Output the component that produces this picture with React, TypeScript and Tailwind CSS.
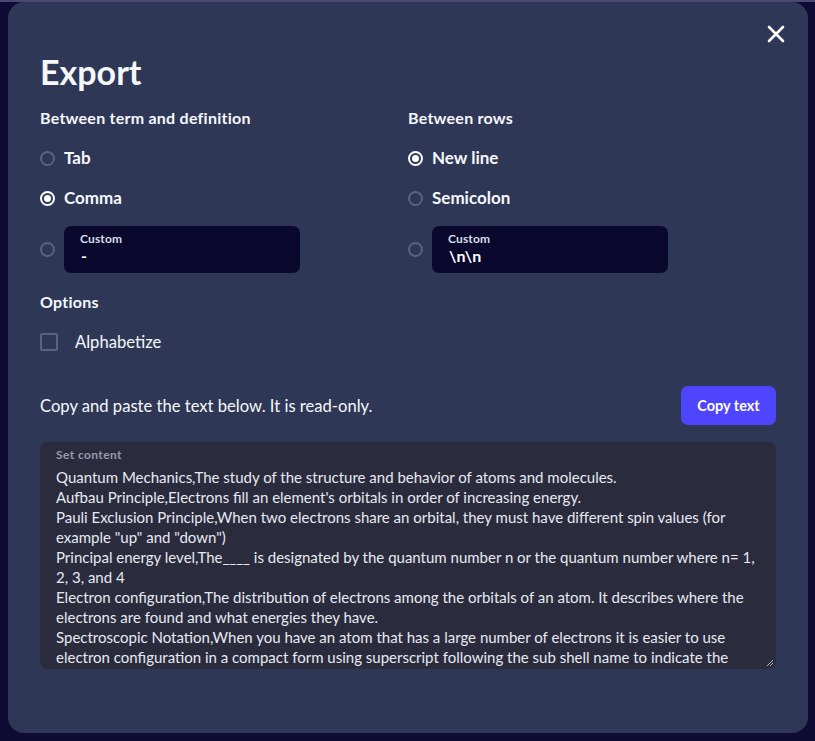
import React from "react";

const lines = [
  "Quantum Mechanics,The study of the structure and behavior of atoms and molecules.",
  "Aufbau Principle,Electrons fill an element's orbitals in order of increasing energy.",
  "Pauli Exclusion Principle,When two electrons share an orbital, they must have different spin values (for",
  'example "up" and "down")',
  "Principal energy level,The____ is designated by the quantum number n or the quantum number where n= 1,",
  "2, 3, and 4",
  "Electron configuration,The distribution of electrons among the orbitals of an atom. It describes where the",
  "electrons are found and what energies they have.",
  "Spectroscopic Notation,When you have an atom that has a large number of electrons it is easier to use",
  "electron configuration in a compact form using superscript following the sub shell name to indicate the",
];

function Radio({ checked }: { checked?: boolean }) {
  return checked ? (
    <span className="flex h-[15px] w-[15px] shrink-0 items-center justify-center rounded-full border-2 border-white">
      <span className="h-[7px] w-[7px] rounded-full bg-white" />
    </span>
  ) : (
    <span className="h-[15px] w-[15px] shrink-0 rounded-full border-2 border-[#586380]" />
  );
}

function RadioRow({ label, checked }: { label: string; checked?: boolean }) {
  return (
    <div className="flex h-[20px] items-center gap-[9px]">
      <Radio checked={checked} />
      <span className="text-[17px] font-bold leading-[20px] text-[#f6f7fb]">{label}</span>
    </div>
  );
}

function CustomRow({ value }: { value: string }) {
  return (
    <div className="flex items-center gap-[9px]">
      <Radio />
      <div className="flex h-[47px] w-[236px] flex-col rounded-[7px] bg-[#0a092d] pl-[16px] pt-[6px]">
        <span className="text-[12px] font-bold leading-[14px] tracking-[0.15px] text-[#d9dde8]">Custom</span>
        <span className="pl-[1px] text-[16px] font-bold leading-[20px] text-white">{value}</span>
      </div>
    </div>
  );
}

export default function App() {
  return (
    <div
      className="relative h-[741px] w-[815px] overflow-hidden bg-[#0f0b33]"
      style={{ fontFamily: "Lato, 'Noto Sans', sans-serif" }}
    >
      <div className="h-[2px] w-full bg-[#4d4673]" />
      <div className="relative ml-[8px] flex h-[731px] w-[800px] flex-col rounded-[16px] bg-[#2e3856] px-[32px] pt-[50px]">
        <button className="absolute right-[20px] top-[20px] flex h-[24px] w-[24px] items-center justify-center text-white">
          <svg width="18" height="18" viewBox="0 0 18 18" fill="none" stroke="currentColor" strokeWidth="2.6" strokeLinecap="round">
            <path d="M2 2 L16 16 M16 2 L2 16" />
          </svg>
        </button>
        <h1 className="text-[34px] font-bold leading-[40px] text-[#f6f7fb]">Export</h1>

        <div className="mt-[16px] grid grid-cols-2">
          <div className="flex flex-col">
            <div className="text-[16px] font-bold leading-[20px] tracking-[0.25px] text-[#f6f7fb]">Between term and definition</div>
            <div className="mt-[20px] flex flex-col gap-[20px]">
              <RadioRow label="Tab" />
              <RadioRow label="Comma" checked />
            </div>
            <div className="mt-[18px]">
              <CustomRow value="-" />
            </div>
          </div>
          <div className="flex flex-col">
            <div className="text-[16px] font-bold leading-[20px] tracking-[0.25px] text-[#f6f7fb]">Between rows</div>
            <div className="mt-[20px] flex flex-col gap-[20px]">
              <RadioRow label="New line" checked />
              <RadioRow label="Semicolon" />
            </div>
            <div className="mt-[18px]">
              <CustomRow value="\n\n" />
            </div>
          </div>
        </div>

        <div className="mt-[19px] text-[16px] font-bold leading-[20px] tracking-[0.25px] text-[#f6f7fb]">Options</div>
        <div className="mt-[20px] flex h-[20px] items-center gap-[17px]">
          <span className="h-[18px] w-[18px] rounded-[2px] border-2 border-[#586380]" />
          <span className="text-[16.6px] leading-[20px] text-[#f6f7fb]">Alphabetize</span>
        </div>

        <div className="mt-[34px] flex items-center justify-between">
          <span className="text-[16.6px] leading-[20px] text-[#f6f7fb]">Copy and paste the text below. It is read-only.</span>
          <button className="h-[39px] w-[95px] rounded-[7px] bg-[#4f45ff] text-[14.5px] font-bold text-white">Copy text</button>
        </div>

        <div className="relative mt-[17px] h-[227px] overflow-hidden rounded-[8px] bg-[#2a2c3e] pl-[16px] pt-[6px]">
          <div className="text-[12px] font-bold leading-[14px] tracking-[0.4px] text-[#939bb4]">Set content</div>
          <div className="mt-[5px] flex flex-col">
            {lines.map((l, i) => (
              <div key={i} className="whitespace-nowrap text-[15px] leading-[20px] text-[#e7e9f0]">
                {l}
              </div>
            ))}
          </div>
          <svg className="absolute bottom-[2px] right-[2px]" width="8" height="8" viewBox="0 0 8 8" stroke="#b5b8c4" strokeWidth="1">
            <path d="M7 1 L1 7 M7 4 L4 7" />
          </svg>
        </div>
      </div>
    </div>
  );
}
